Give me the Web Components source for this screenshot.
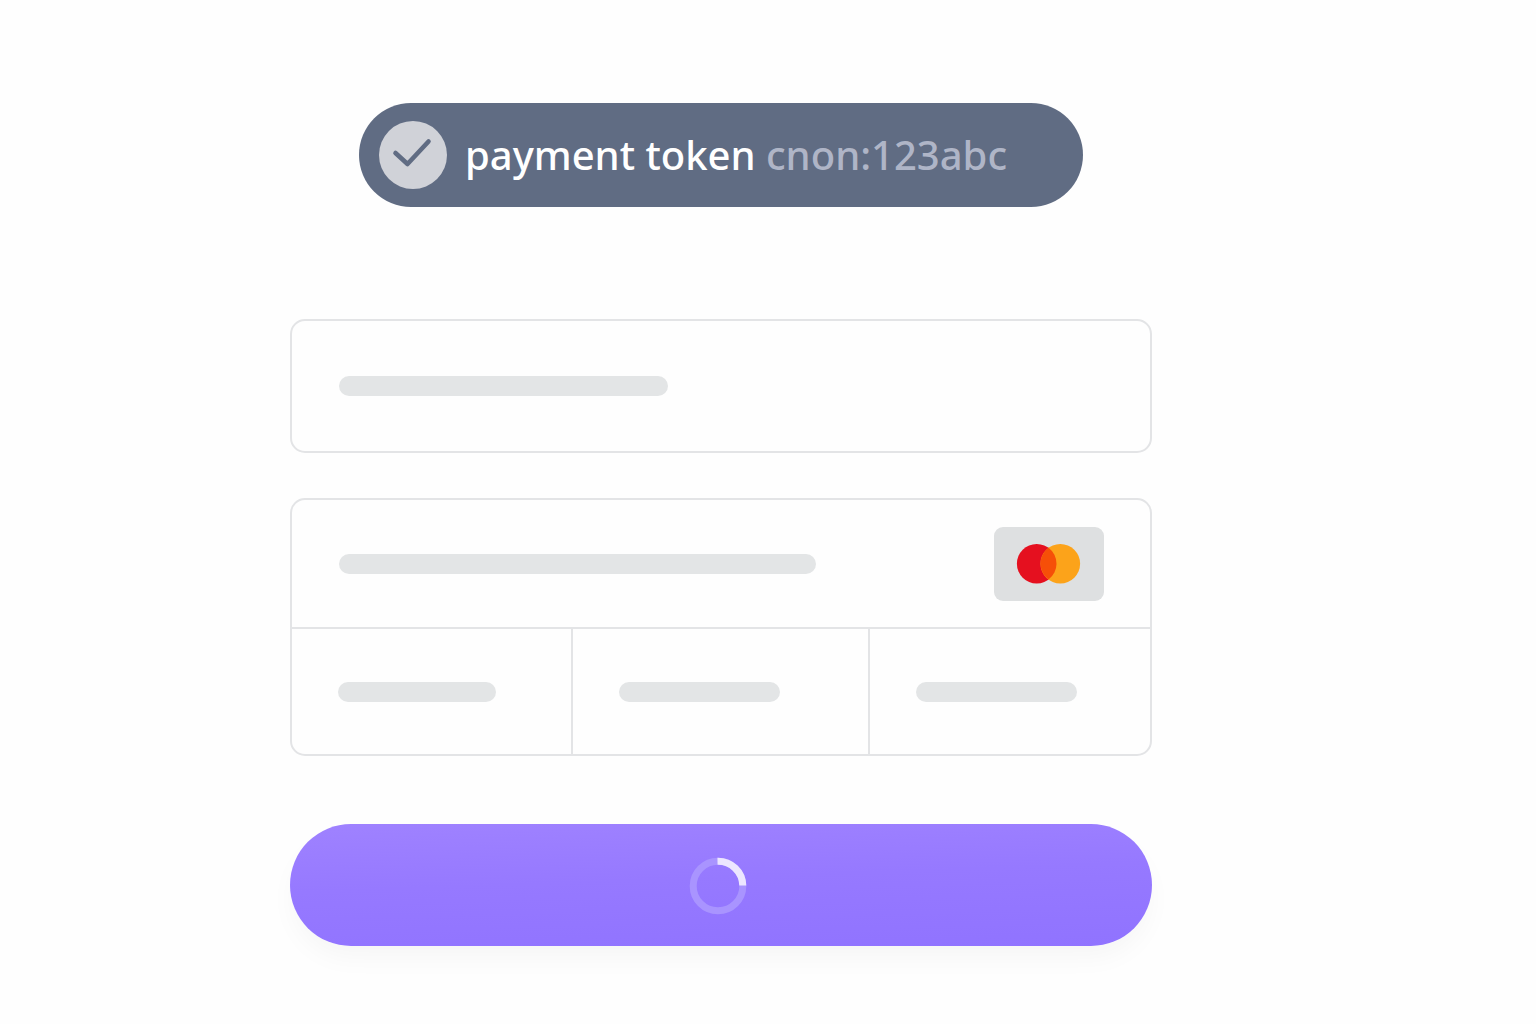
<!DOCTYPE html>
<html lang="en">
<head>
<meta charset="utf-8">
<meta name="viewport" content="width=device-width, initial-scale=1">
<title>Payment token</title>
<style>
  body { margin: 0; background: #fefefe; font-family: "Noto Sans", "Open Sans", sans-serif; }
</style>
</head>
<body>
<payment-page>
  <token-pill slot="status" label="payment token">cnon:123abc</token-pill>
  <field-card><skeleton-bar style="--w:329px"></skeleton-bar></field-card>
  <card-details></card-details>
  <pay-button slot="action"></pay-button>
</payment-page>
<script>
const define = (name, html, init) => customElements.define(name, class extends HTMLElement {
  connectedCallback() {
    if (this.shadowRoot) return;
    this.attachShadow({ mode: "open" }).innerHTML = html;
    if (init) init(this);
  }
});

define("payment-page", `
  <style>
    :host { display: flex; justify-content: center; box-sizing: border-box; padding: 103px 118px 78px 24px; }
    main { display: flex; flex-direction: column; width: 100%; max-width: 862px; }
    .status { display: flex; justify-content: center; margin-bottom: 112px; }
    .fields { display: flex; flex-direction: column; gap: 45px; margin-bottom: 68px; }
  </style>
  <main>
    <div class="status"><slot name="status"></slot></div>
    <div class="fields"><slot></slot></div>
    <slot name="action"></slot>
  </main>`);

define("token-pill", `
  <style>
    :host { display: flex; align-items: center; gap: 18px; box-sizing: border-box; width: 84%; height: 104px;
      padding: 0 20px; border-radius: 52px; background: #606c83; color: #fff; }
    svg { flex: none; width: 68px; height: 68px; }
    p { margin: 0; font-size: 40px; line-height: 52px; font-weight: 500; white-space: nowrap; }
    .value { color: #afb5c7; }
  </style>
  <svg viewBox="0 0 68 68" aria-hidden="true">
    <circle cx="34" cy="34" r="34" fill="#d0d2d8"/>
    <path d="M16.500 32L28.500 43L49.500 20.500" fill="none" stroke="#606c83" stroke-width="4.600" stroke-linecap="round" stroke-linejoin="round"/>
  </svg>
  <p><span class="label"></span> <span class="value"><slot></slot></span></p>`,
  el => { el.shadowRoot.querySelector(".label").textContent = el.getAttribute("label"); });

define("skeleton-bar", `
  <style>
    :host { display: block; width: var(--w, 161px); max-width: 100%; height: 20px; border-radius: 10px; background: #e3e5e6; }
  </style>`);

define("field-card", `
  <style>
    :host { display: flex; align-items: center; box-sizing: border-box; height: 134px; padding: 0 46px 0 47px;
      border: 2px solid #e3e4e6; border-radius: 15px; }
  </style>
  <slot></slot>`);

define("card-brand", `
  <style>
    :host { display: flex; flex: none; width: 110px; height: 74px; border-radius: 9px; background: #dee0e1; }
    svg { width: 100%; height: 100%; }
  </style>
  <svg viewBox="0 0 110 74" role="img" aria-label="Mastercard">
    <circle cx="42.700" cy="36.700" r="19.800" fill="#e5101f"/>
    <circle cx="66.300" cy="36.700" r="19.800" fill="#fca31a"/>
    <path d="M54.500 20.800A19.800 19.800 0 0 1 54.500 52.600A19.800 19.800 0 0 1 54.500 20.800Z" fill="#f64f08"/>
  </svg>`);

define("card-details", `
  <style>
    :host { display: block; border: 2px solid #e3e4e6; border-radius: 15px; }
    .number { display: flex; align-items: center; justify-content: space-between; height: 127px;
      padding: 0 46px 0 47px; border-bottom: 2px solid #e3e4e6; }
    .cells { display: grid; grid-template-columns: 279fr 297fr 282fr; }
    .cell { display: flex; align-items: center; box-sizing: border-box; height: 125px; padding: 0 24px 0 46px; }
    .cell + .cell { border-left: 2px solid #e3e4e6; }
  </style>
  <div class="number"><skeleton-bar style="--w:477px"></skeleton-bar><card-brand></card-brand></div>
  <div class="cells">
    <div class="cell"><skeleton-bar style="--w:158px"></skeleton-bar></div>
    <div class="cell"><skeleton-bar></skeleton-bar></div>
    <div class="cell"><skeleton-bar></skeleton-bar></div>
  </div>`);

define("pay-button", `
  <style>
    :host { display: block; }
    button { display: flex; align-items: center; justify-content: center; width: 100%; height: 122px;
      border: 0; padding: 2px 6px 0 0; border-radius: 61px;
      background: linear-gradient(178deg, #9f82ff 0%, #9679ff 45%, #9073ff 100%);
      box-shadow: 0 14px 28px -4px rgba(0, 0, 0, .04); }
    svg { width: 58px; height: 58px; }
  </style>
  <button type="button" aria-label="Processing payment">
    <svg viewBox="0 0 58 58" fill="none" stroke-width="7" aria-hidden="true">
      <circle cx="29" cy="29" r="24.800" stroke="#a994ff"/>
      <path d="M28.500 4.200A24.800 24.800 0 0 1 53.800 28.500" stroke="#ece6ff"/>
    </svg>
  </button>`);
</script>
</body>
</html>
